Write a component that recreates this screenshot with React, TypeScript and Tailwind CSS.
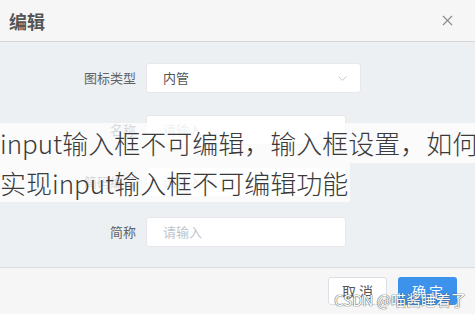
import React from "react";
import { X, ChevronDown } from "lucide-react";

const FONT = "font-['Noto_Sans_CJK_SC','Noto_Sans',sans-serif]";

const rows = [
  { label: "名称", value: "" },
  { label: "简码编号", value: "" },
  { label: "简称", value: "" },
];

const App: React.FC = () => {
  return (
    <div className={`relative w-[475px] h-[314px] overflow-hidden bg-white ${FONT}`}>
      {/* header */}
      <div className="h-[42px] bg-[#f6f6f6] border-b border-[#d6d6d6] flex items-center justify-between pl-[9px] pr-[19px]">
        <span className="text-[18px] font-bold text-[#555] leading-none">编辑</span>
        <X size={17} strokeWidth={1.6} className="text-[#8a8a8a]" />
      </div>

      {/* body */}
      <div className="h-[225px] bg-[#edf0f3] pt-[21px] flex flex-col">
        <div className="flex items-center h-[30px]">
          <div className="w-[136px] text-right text-[13px] text-[#606266]">图标类型</div>
          <div className="ml-[10px] w-[215px] h-[30px] bg-white border border-[#e6e8ec] rounded-[3px] flex items-center justify-between pl-[16px] pr-[10px]">
            <span className="text-[13px] text-[#555]">内管</span>
            <ChevronDown size={15} strokeWidth={1.5} className="text-[#c0c4cc]" />
          </div>
        </div>
        {rows.map((r, i) => (
          <div key={r.label} className={`flex items-center h-[30px] ${i === 2 ? "mt-[20px]" : "mt-[22px]"}`}>
            <div className="w-[136px] text-right text-[13px] text-[#606266]">{r.label}</div>
            <div className="ml-[10px] w-[200px] h-[30px] bg-white border border-[#e6e8ec] rounded-[3px] flex items-center pl-[16px]">
              <span className="text-[13px] text-[#c0c4cc]">请输入</span>
            </div>
          </div>
        ))}
      </div>

      {/* footer */}
      <div className="h-[47px] bg-[#f6f6f6] border-t border-[#dcdcdc] flex items-center justify-end gap-[11px] pr-[18px]">
        <button className="w-[59px] h-[28px] bg-white border border-[#dcdfe6] rounded-[3px] text-[14px] text-[#555]">
          取 消
        </button>
        <button className="w-[59px] h-[28px] bg-[#3d92ec] rounded-[3px] text-[14px] text-white">
          确 定
        </button>
      </div>

      {/* title overlay */}
      <div className="absolute left-0 top-[123px] flex flex-col items-start">
        <span className="whitespace-nowrap h-[40px] leading-[40px] text-[26px] font-light text-[#3a3a3a] bg-white/75 pr-[4px]">
          input输入框不可编辑，输入框设置，如何
        </span>
        <span className="whitespace-nowrap h-[39px] leading-[39px] text-[26px] font-light text-[#3a3a3a] bg-white/75 pr-[2px]">
          实现input输入框不可编辑功能
        </span>
      </div>

      {/* watermark */}
      <div className="absolute right-[9px] bottom-[7px] text-[15px] leading-none text-white [text-shadow:0_0_1px_#444,0_0_1px_#444]">
        CSDN @喵酱睡着了
      </div>
    </div>
  );
};

export default App;
